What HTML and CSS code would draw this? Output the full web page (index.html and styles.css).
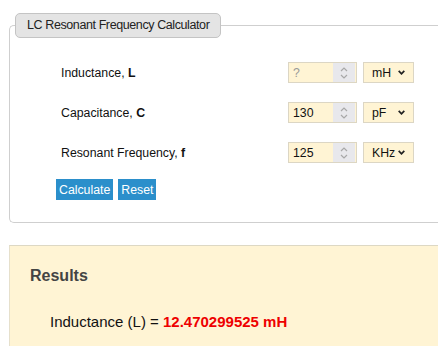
FILE: index.html
```html
<!DOCTYPE html>
<html lang="en">
<head>
    <meta charset="UTF-8">
    <meta name="viewport" content="width=device-width, initial-scale=1.0">
    <title>LC Resonant Frequency Calculator</title>
    <link rel="stylesheet" href="styles.css">
</head>
<body>
    <div class="page">
    <fieldset class="calc">
        <legend>LC Resonant Frequency Calculator</legend>
        <div class="rows">
            <div class="row">
                <label>Inductance, <b>L</b></label>
                <div class="num">
                    <input type="text" placeholder="?">
                    <span class="spin"><svg width="10" height="14" viewBox="0 0 10 14"><path d="M2 5 L5 2 L8 5 M2 9 L5 12 L8 9" fill="none" stroke="#a8a8a8" stroke-width="1.2"/></svg></span>
                </div>
                <div class="unit">
                    <span>mH</span>
                    <svg width="7" height="5" viewBox="0 0 7 5"><path d="M0.7 0.8 L3.5 3.8 L6.3 0.8" fill="none" stroke="#222" stroke-width="1.7"/></svg>
                </div>
            </div>
            <div class="row">
                <label>Capacitance, <b>C</b></label>
                <div class="num">
                    <input type="text" value="130">
                    <span class="spin"><svg width="10" height="14" viewBox="0 0 10 14"><path d="M2 5 L5 2 L8 5 M2 9 L5 12 L8 9" fill="none" stroke="#a8a8a8" stroke-width="1.2"/></svg></span>
                </div>
                <div class="unit">
                    <span>pF</span>
                    <svg width="7" height="5" viewBox="0 0 7 5"><path d="M0.7 0.8 L3.5 3.8 L6.3 0.8" fill="none" stroke="#222" stroke-width="1.7"/></svg>
                </div>
            </div>
            <div class="row">
                <label>Resonant Frequency, <b>f</b></label>
                <div class="num">
                    <input type="text" value="125">
                    <span class="spin"><svg width="10" height="14" viewBox="0 0 10 14"><path d="M2 5 L5 2 L8 5 M2 9 L5 12 L8 9" fill="none" stroke="#a8a8a8" stroke-width="1.2"/></svg></span>
                </div>
                <div class="unit">
                    <span>KHz</span>
                    <svg width="7" height="5" viewBox="0 0 7 5"><path d="M0.7 0.8 L3.5 3.8 L6.3 0.8" fill="none" stroke="#222" stroke-width="1.7"/></svg>
                </div>
            </div>
        </div>
        <div class="buttons">
            <button>Calculate</button>
            <button>Reset</button>
        </div>
    </fieldset>

    <div class="results">
        <h3>Results</h3>
        <p>Inductance (L) = <span class="value">12.470299525 mH</span></p>
    </div>
    </div>
</body>
</html>
```

FILE: styles.css
```css
html, body {
    overflow: hidden;
}
body {
    margin: 0;
    background: #fff;
    font-family: "Liberation Sans", Arial, sans-serif;
    font-size: 12.3px;
    color: #111;
}
.page {
    padding: 13px 0 0 9px;
}
.calc {
    margin: 0;
    padding: 0 0 22px 0;
    border: 1px solid #cfcfcf;
    border-right: none;
    border-radius: 5px 0 0 5px;
}
.calc legend {
    margin-left: 5px;
    padding: 0 11px;
    height: 23px;
    line-height: 23px;
    background: #e4e4e4;
    border: 1px solid #c4c4c4;
    border-radius: 5px;
    color: #222;
    font-size: 12.5px;
    letter-spacing: -0.4px;
}
.rows {
    padding: 23px 0 0 51px;
    display: flex;
    flex-direction: column;
    gap: 18px;
}
.row {
    display: flex;
    align-items: center;
    height: 21px;
    padding-top: 1px;
}
.row label {
    width: 227px;
}
.num {
    width: 67px;
    height: 19px;
    display: flex;
    align-items: center;
    background: #fff4d4;
    border: 1px solid #dcd6c4;
}
.num input {
    width: 40px;
    border: none;
    background: transparent;
    font: inherit;
    color: #111;
    padding: 0 0 0 4px;
    outline: none;
}
.num input::placeholder {
    color: #999;
}
.spin {
    width: 22px;
    height: 19px;
    background: #e8e8ec;
    display: flex;
    align-items: center;
    justify-content: center;
}
.unit {
    margin-left: 6px;
    width: 33px;
    height: 19px;
    display: flex;
    align-items: center;
    padding: 0 8px 0 8px;
    background: #fff4d4;
    border: 1px solid #dcd6c4;
}
.unit span {
    flex: 1;
}
.buttons {
    padding: 16px 0 0 46px;
    display: flex;
    gap: 5px;
}
.buttons button {
    height: 21px;
    padding: 0 3px;
    border: none;
    background: #2b8fcb;
    color: #fff;
    font: inherit;
}
.results {
    margin-top: 22px;
    height: 100px;
    background: #fff4d4;
    border-top: 1px solid #ddd8c4;
    border-left: 1px solid #e6e0cc;
    padding: 0 0 0 20px;
}
.results h3 {
    margin: 0;
    padding-top: 21px;
    font-size: 16px;
    color: #444;
}
.results p {
    margin: 28px 0 0 20px;
    font-size: 15px;
}
.results .value {
    color: #e00;
    font-weight: bold;
}
```
